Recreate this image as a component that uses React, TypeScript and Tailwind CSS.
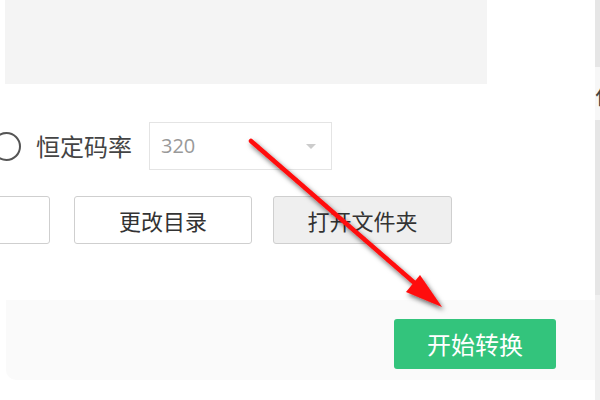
import React from 'react';

const font = { fontFamily: '"Noto Sans CJK SC", "Noto Sans", sans-serif' };

// red annotation arrow drawn over the form
const Arrow = () => (
  <svg
    className="pointer-events-none absolute left-0 top-0"
    width="600"
    height="400"
    viewBox="0 0 600 400"
  >
    <defs>
      <filter id="shadow" x="-20%" y="-20%" width="140%" height="140%">
        <feDropShadow dx="2" dy="3" stdDeviation="2.5" floodColor="#000" floodOpacity="0.6" />
      </filter>
    </defs>
    <g filter="url(#shadow)">
      <line x1="251" y1="141" x2="425" y2="292" stroke="#ff0a0a" strokeWidth="4.5" strokeLinecap="round" />
      <polygon points="442,307 406,292 420,275" fill="#ff0a0a" />
    </g>
  </svg>
);

export default function App() {
  return (
    <div
      className="relative flex h-[400px] w-[600px] overflow-hidden bg-white text-[#333]"
      style={font}
    >
      {/* main column */}
      <div className="flex w-[595px] flex-col overflow-hidden">
        {/* preview area */}
        <div className="ml-[5px] h-[84px] w-[482px] bg-[#f4f4f4]" />

        {/* bitrate row */}
        <div className="mt-[38px] flex h-[48px] items-center">
          <div className="-ml-[8px] h-[29px] w-[29px] shrink-0 rounded-full border-2 border-[#555]" />
          <span className="ml-[15px] text-[24px] leading-none text-[#444]">恒定码率</span>
          <div className="ml-[17px] flex h-[48px] w-[183px] items-center justify-between border border-[#e4e4e4] pl-[11px] pr-[15px]">
            <span className="text-[20px] text-[#999]" style={{ fontFamily: '"Open Sans", "Noto Sans", sans-serif' }}>
              320
            </span>
            <span className="h-0 w-0 border-x-[5px] border-t-[5px] border-x-transparent border-t-[#ccc]" />
          </div>
        </div>

        {/* output directory row */}
        <div className="mt-[26px] flex h-[48px] items-center">
          <div className="-ml-[2px] h-[48px] w-[52px] rounded-r-[3px] border border-[#cfcfcf]" />
          <button className="ml-[24px] flex h-[48px] w-[178px] items-center justify-center rounded-[3px] border border-[#cfcfcf] bg-white text-[22px] text-[#333]">
            更改目录
          </button>
          <button className="ml-[21px] flex h-[48px] w-[179px] items-center justify-center rounded-[3px] border border-[#cfcfcf] bg-[#efefef] text-[22px] text-[#333]">
            打开文件夹
          </button>
        </div>

        {/* footer */}
        <div className="ml-[6px] mt-[56px] flex h-[80px] justify-end rounded-bl-[10px] bg-[#fafafa] pr-[39px] pt-[19px]">
          <button className="flex h-[50px] w-[162px] items-center justify-center rounded-[3px] bg-[#33c47c] text-[24px] text-white">
            开始转换
          </button>
        </div>
      </div>

      {/* neighbouring window edge */}
      <div className="flex w-[5px] flex-col">
        <div className="h-[67px] bg-[#e6e6e6]" />
        <div className="flex h-[53px] items-center overflow-hidden bg-[#f7f7f7]">
          <span className="text-[22px] leading-none text-[#444]">仁</span>
        </div>
        <div className="h-[175px] bg-[#e6e6e6]" />
        <div className="flex-1 bg-[#f0f0f0]" />
      </div>

      <Arrow />
    </div>
  );
}
